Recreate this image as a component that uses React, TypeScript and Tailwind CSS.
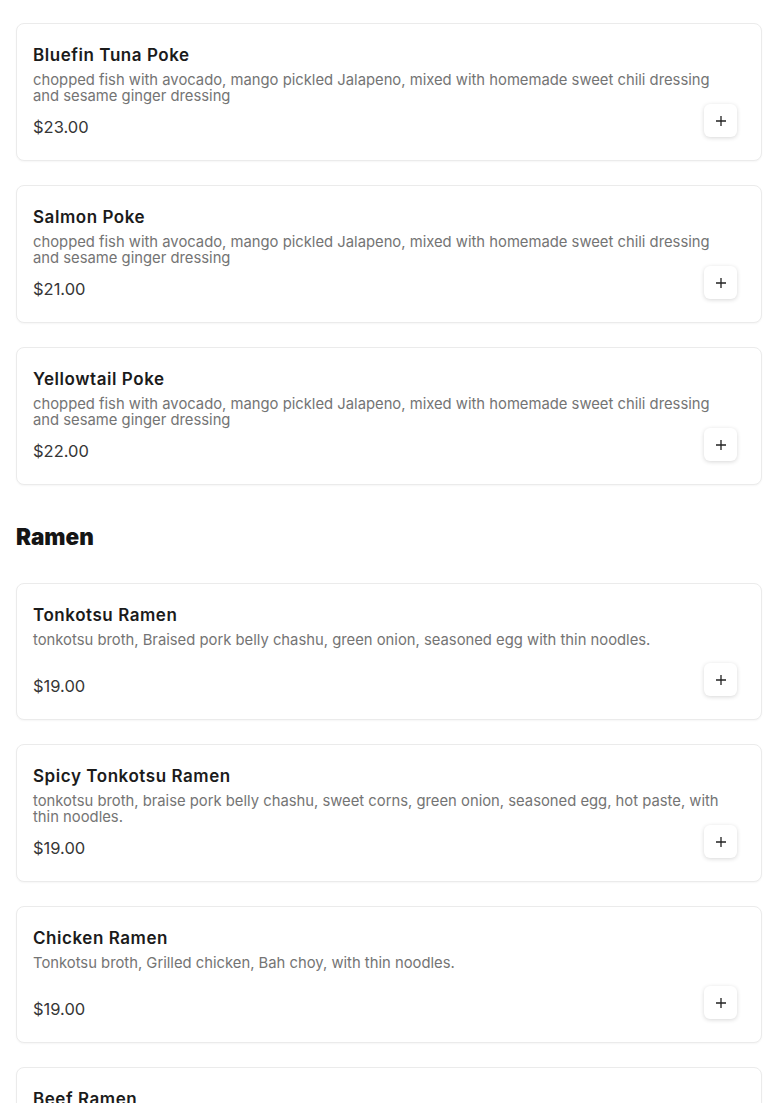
import React from "react";

type Item = { name: string; desc: string; price: string };

const poke: Item[] = [
  {
    name: "Bluefin Tuna Poke",
    desc: "chopped fish with avocado, mango pickled Jalapeno, mixed with homemade sweet chili dressing and sesame ginger dressing",
    price: "$23.00",
  },
  {
    name: "Salmon Poke",
    desc: "chopped fish with avocado, mango pickled Jalapeno, mixed with homemade sweet chili dressing and sesame ginger dressing",
    price: "$21.00",
  },
  {
    name: "Yellowtail Poke",
    desc: "chopped fish with avocado, mango pickled Jalapeno, mixed with homemade sweet chili dressing and sesame ginger dressing",
    price: "$22.00",
  },
];

const ramen: Item[] = [
  {
    name: "Tonkotsu Ramen",
    desc: "tonkotsu broth, Braised pork belly chashu, green onion, seasoned egg with thin noodles.",
    price: "$19.00",
  },
  {
    name: "Spicy Tonkotsu Ramen",
    desc: "tonkotsu broth, braise pork belly chashu, sweet corns, green onion, seasoned egg, hot paste, with thin noodles.",
    price: "$19.00",
  },
  {
    name: "Chicken Ramen",
    desc: "Tonkotsu broth, Grilled chicken, Bah choy, with thin noodles.",
    price: "$19.00",
  },
  {
    name: "Beef Ramen",
    desc: "tonkotsu broth, sliced beef, green onion, seasoned egg with thin noodles.",
    price: "$19.00",
  },
];

function Plus() {
  return (
    <svg width="12" height="12" viewBox="0 0 12 12" fill="none">
      <path d="M6 1v10M1 6h10" stroke="#222" strokeWidth="1.3" />
    </svg>
  );
}

function Card({ item }: { item: Item }) {
  return (
    <div className="rounded-lg border border-[#ebebeb] bg-white px-4 pt-5 pb-[21px] shadow-[0_1px_2px_rgba(0,0,0,0.04)]">
      <div className="text-[17px] leading-[22px] font-semibold tracking-[0.55px] text-[#1b1b1b]">{item.name}</div>
      <div className="mt-[6px] min-h-[31px] pr-5 text-[14.8px] leading-[16px] text-[#747474]">{item.desc}</div>
      <div className="flex items-start justify-between">
        <div className="mt-[11px] text-[16.5px] leading-[24px] text-[#363636]">{item.price}</div>
        <button className="mr-2 flex h-[33px] w-[33px] items-center justify-center rounded-md bg-white shadow-[0_1px_4px_rgba(0,0,0,0.16)]">
          <Plus />
        </button>
      </div>
    </div>
  );
}

export default function App() {
  return (
    <div className="min-h-screen bg-white px-4 pt-[23px] pb-10" style={{ fontFamily: "Inter, 'Noto Sans', sans-serif" }}>
      <div className="flex flex-col gap-6">
        {poke.map((it) => (
          <Card key={it.name} item={it} />
        ))}
      </div>
      <h2 className="mt-[36px] mb-[30px] text-[22.5px] leading-[32px] font-black text-[#151515]">Ramen</h2>
      <div className="flex flex-col gap-6">
        {ramen.map((it) => (
          <Card key={it.name} item={it} />
        ))}
      </div>
    </div>
  );
}
